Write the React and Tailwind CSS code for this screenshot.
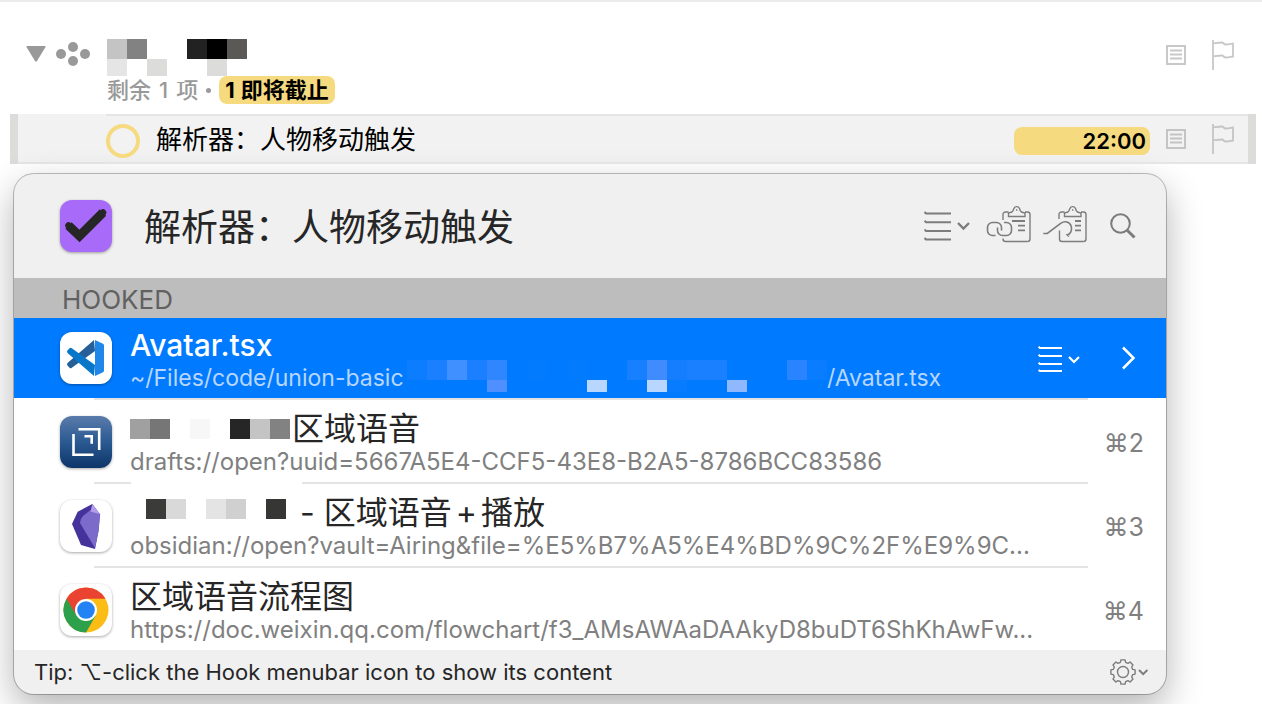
const CARDS = 'size-[52px] shrink-0 rounded-xl shadow-[0_1px_3px_rgba(0,0,0,0.35)]';

// Redacted names, drawn as rows of colour cells
function Mosaic({ rows, className = '' }) {
  return (
    <div aria-hidden="true" className={`shrink-0 ${className}`}>
      {rows.map((row, r) => (
        <div key={r} className={`flex ${row.height}`}>
          {row.cells.map((color, i) => <span key={i} className={`w-5 ${color}`}/>)}
        </div>
      ))}
    </div>
  );
}

const PROJECT_NAME = [
  { height: 'h-5', cells: ['bg-[#c4c4c4]', 'bg-[#828282]', '', '', 'bg-[#222222]', 'bg-black', 'bg-[#5a5955]'] },
  { height: 'h-[17px]', cells: ['bg-[#e5e5e5]', '', 'bg-[#dcdcdb]', '', '', 'bg-[#dcdcdb]', ''] },
];

const HIDDEN_PATH = [
  {
    height: 'h-5',
    cells: ['bg-[#0c7dff]', 'bg-[#1a80ff]', 'bg-[#4090ff]', 'bg-[#1a80ff]', 'bg-[#2f86ff]', '', 'bg-[#037bff]',
      '', 'bg-[#037bff]', '', '', 'bg-[#1680ff]', 'bg-[#408cff]', 'bg-[#147eff]', 'bg-[#1a80ff]', 'bg-[#1a80ff]',
      '', '', '', 'bg-[#2a84ff]', 'bg-[#0a7cff]'],
  },
  {
    height: 'h-3',
    cells: ['', '', '', '', 'bg-[#4f8fff]', '', '', '', '', 'bg-[#b9d6ff]', '', '', 'bg-[#b9d6ff]',
      'bg-[#087cff]', '', '', 'bg-[#90b8ff]', '', '', '', ''],
  },
];

const DRAFT_NAME = [
  { height: 'h-5', cells: ['bg-[#a0a0a0]', 'bg-[#767676]', '', 'bg-[#f7f7f7]', '', 'bg-[#262626]', 'bg-[#c4c4c4]', 'bg-[#828282]'] },
];

const NOTE_NAME = [
  { height: 'h-5', cells: ['bg-[#3b3b39]', 'bg-[#d9d9d9]', '', 'bg-[#e4e4e4]', 'bg-[#d0d0d0]', '', 'bg-[#363634]'] },
];

function NoteIcon() {
  return (
    <svg width="20" height="20" viewBox="0 0 20 20" fill="none" stroke="currentColor" strokeWidth="2">
      <path d="M1 1h18v18H1z"/>
      <path d="M4 5.500h12M4 9.500h12M4 13.500h12" strokeWidth="1.800"/>
    </svg>
  );
}

function FlagIcon() {
  return (
    <svg width="22" height="30" viewBox="0 0 22 30" fill="none" stroke="currentColor" strokeWidth="1.800">
      <path d="M1 0v30M1 3.500c4-.6 6-1 9-1 2 0 1 2 4 2 2 0 4-.5 7-1v13c-3 .5-5 1-7 1-3 0-2-2-4-2-3 0-5 .4-9 1"/>
    </svg>
  );
}

function MenuIcon() {
  return (
    <svg width="46" height="30" viewBox="0 0 46 30" fill="none" stroke="currentColor" strokeWidth="2">
      <path d="M.5 1 2 2.500h25M.5 9.700 2 11.200h25M.5 18.400 2 19.900h25M.5 27 2 28.500h25"/>
      <path d="m34 12 5.500 5.500L45 12" strokeWidth="2.400"/>
    </svg>
  );
}

function RowMenuIcon() {
  return (
    <svg width="42" height="28" viewBox="0 0 42 28" fill="none" stroke="currentColor" strokeWidth="2">
      <path d="M.5 2.700 2 4h22M.5 10.700 2 12h22M.5 18.700 2 20h22M.5 26.200 2 27h22"/>
      <path d="m31 13 5 5 5-5" strokeWidth="2.200"/>
    </svg>
  );
}

function ClipboardTop() {
  return <path d="M22.500 8v3.500H39V8l-3.500-1c-1.500-1-1.500-2-2-3.500a3 3 0 0 0-5.600 0c-.5 1.500-.5 2.500-2 3.500zM30.700 4.200v1.600M39 7h2.500A2.500 2.500 0 0 1 44 9.500V34a2.500 2.500 0 0 1-2.500 2.500"/>;
}

function LinkClipIcon() {
  return (
    <svg width="46" height="42" viewBox="0 0 46 42" fill="none" stroke="currentColor" strokeWidth="1.400">
      <ClipboardTop/>
      <path d="M22.500 7h-3a2.500 2.500 0 0 0-2.500 2.500V15M17 33.500v.5a2.500 2.500 0 0 0 2.500 2.500h22"/>
      <path d="M26 16h13M32 20.700h7M32 25.300h7" strokeWidth="1.800"/>
      <path d="M9.500 30.500h-3a5 5 0 0 1-5-5v-3a5 5 0 0 1 5-5h4a5 5 0 0 1 5 5v3M18 17.500h2.500a5 5 0 0 1 5 5v3a5 5 0 0 1-5 5h-4a5 5 0 0 1-5-5v-3" strokeWidth="1.600"/>
    </svg>
  );
}

function HookClipIcon() {
  return (
    <svg width="46" height="42" viewBox="0 0 46 42" fill="none" stroke="currentColor" strokeWidth="1.400">
      <ClipboardTop/>
      <path d="M22.500 7h-3a2.500 2.500 0 0 0-2.500 2.500V14M17.500 25.500V34a2.500 2.500 0 0 0 2.500 2.500h21.500"/>
      <path d="M33 16h6M33 20.700h6M33 25.300h6" strokeWidth="1.800"/>
      <path d="M1.300 28.500h4L19 18.200c2-1.400 5.500-1.700 8-.2 2.500 1.700 3.500 6 1.500 9.500-.8 1.200-2 2-3.200 2.300l1.800 1.500" strokeWidth="1.600"/>
    </svg>
  );
}

function SearchIcon() {
  return (
    <svg width="26" height="26" viewBox="0 0 26 26" fill="none" stroke="currentColor" strokeWidth="2">
      <circle cx="10.500" cy="10.500" r="9.300"/>
      <path d="m17.200 17.200 7.300 7.300" strokeWidth="3"/>
    </svg>
  );
}

// Eight-tooth outline, walked tooth by tooth around the centre
const gearPoints = Array.from({ length: 8 }, (_, i) => {
  const a = (i * Math.PI) / 4;
  return [[10, -0.26], [12.3, -0.17], [12.3, 0.17], [10, 0.26]]
    .map(([r, d]) => `${(13 + r * Math.cos(a + d)).toFixed(1)},${(13 + r * Math.sin(a + d)).toFixed(1)}`)
    .join(' ');
}).join(' ');

function GearIcon() {
  return (
    <svg width="38" height="26" viewBox="0 0 38 26" fill="none" stroke="currentColor" strokeWidth="1.400">
      <polygon points={gearPoints} strokeLinejoin="round"/>
      <circle cx="13" cy="13" r="5.500"/>
      <path d="m29 11 4.200 4.200L37.400 11" strokeWidth="2"/>
    </svg>
  );
}

function TaskAppIcon() {
  return (
    <svg viewBox="0 0 52 52" className={`${CARDS} bg-[#a86af9]`}>
      <path d="m8.500 25.500 11 10.500L43 12.500" fill="none" stroke="#262626" strokeWidth="9"/>
      <path d="m8.500 25.500 11 10.500L43 12.500" fill="none" stroke="#262626" strokeWidth="6.500" strokeLinecap="round"/>
    </svg>
  );
}

function CodeIcon() {
  return (
    <svg viewBox="0 0 52 52" className={`${CARDS} bg-white`}>
      <path d="M7.500 31 34 8l1 11-23.500 17q-1 .7-2-.2l-2-2.300q-1-1.200 0-2.500z" fill="#265f97"/>
      <path d="M7.500 21 34 44l1-11-23.500-17q-1-.7-2 .2l-2 2.300q-1 1.200 0 2.500z" fill="#0877c9"/>
      <path d="m35 8 8 3.800q1 .5 1 1.700v25q0 1.200-1 1.700L35 44z" fill="#1f86ea"/>
    </svg>
  );
}

function DraftsIcon() {
  return (
    <svg viewBox="0 0 52 52" className={`${CARDS} bg-linear-to-b from-[#5a7bab] via-[#2a5a92] to-[#0d3569]`} fill="none" stroke="#fff" strokeWidth="2.600">
      <path d="M13.500 18v20.800h20M18.500 13.200h20.700V34M24.500 20.200h7.200v7.500"/>
    </svg>
  );
}

function ObsidianIcon() {
  return (
    <svg viewBox="0 0 52 52" className={`${CARDS} bg-white`}>
      <path d="M32.300 4 40 14.300 38.500 31 35 49l-14-4-9-21 5.700-12.300z" fill="#45329a"/>
      <path d="m30.500 10 9.500 4.300L38.500 31 35 48 20 23q0-4 3-7z" fill="#7c6bcb"/>
      <path d="M32.300 4 40 14.300l-9.500-2.800z" fill="#b49bec"/>
    </svg>
  );
}

function ChromeIcon() {
  return (
    <svg viewBox="0 0 52 52" className={`${CARDS} bg-white`}>
      <circle cx="26" cy="26" r="22.500" fill="#fbbc16"/>
      <path d="M26 26 6.500 14.750A22.500 22.500 0 0 0 26 48.500L35.500 32z" fill="#2da04c"/>
      <path d="M26 26 16.500 31.500 6.500 14.750a22.500 22.500 0 0 1 39 0H26z" fill="#ea4331"/>
      <circle cx="26" cy="26" r="11" fill="#fff"/>
      <circle cx="26" cy="26" r="8.800" fill="#2383f5"/>
    </svg>
  );
}

function HookRow({ icon, title, path, shortcut, selected, gap }) {
  return (
    <li className={selected ? 'bg-[#007aff]' : 'bg-white'}>
      {!selected && (
        <div className="mr-[78px] ml-20 flex h-1 items-start">
          <span className={`h-0.5 bg-[#e4e4e4] ${gap ? 'w-[37px]' : 'grow'}`}/>
          {gap && <span className="ml-[171px] h-0.5 grow bg-[#e4e4e4]"/>}
        </div>
      )}
      <div className="flex h-20 items-center pr-[22px] pl-[46px]">
        {icon}
        <a href="#" className="ml-[18px] min-w-0 grow pt-1">
          <span className={`flex h-9 items-center leading-9 whitespace-nowrap ${selected ? 'text-[30px] font-medium text-white' : 'text-[32px] text-[#262626]'}`}>
            {title}
          </span>
          <span className={`flex h-[30px] items-center leading-[30px] whitespace-nowrap ${selected ? 'text-[23px] text-[#b9d6ff]' : 'text-[24px] text-[#808080]'}`}>
            {path}
          </span>
        </a>
        {shortcut && <kbd className="shrink-0 pt-1 font-['Inter','DejaVu_Sans',sans-serif] text-[25px] text-[#808080]">{shortcut}</kbd>}
        {selected && (
          <div className="flex shrink-0 items-center gap-10 pr-2 text-white">
            <button aria-label="Item actions"><RowMenuIcon/></button>
            <button aria-label="Open">
              <svg width="16" height="24" viewBox="0 0 16 24" fill="none" stroke="currentColor" strokeWidth="2.500">
                <path d="m3 1.500 10.500 10.500L3 22.500"/>
              </svg>
            </button>
          </div>
        )}
      </div>
    </li>
  );
}

export default function App() {
  return (
    <main className="min-h-screen overflow-x-hidden border-t-2 border-[#ebebeb] bg-white pb-2.5 font-['Inter','Noto_Sans_CJK_SC',sans-serif] text-black">
      {/* Project header */}
      <header className="flex h-28 items-start pt-[37px] pr-7 pl-[26px]">
        <button aria-label="Collapse project" className="mt-[7px] text-[#999]">
          <svg width="20" height="16" viewBox="0 0 20 16" fill="currentColor"><path d="M1 0h18q1 0 .5 1L11 15q-1 1.500-2 0L.5 1Q0 0 1 0z"/></svg>
        </button>
        <svg width="34" height="24" viewBox="0 0 34 24" fill="#999" className="mt-[3px] ml-2.5">
          <circle cx="5" cy="12" r="5"/><circle cx="17" cy="5" r="5"/><circle cx="17" cy="19" r="5"/><circle cx="29" cy="12" r="5"/>
        </svg>
        <div className="ml-[17px] grow">
          <Mosaic rows={PROJECT_NAME}/>
          <p className="flex h-7 items-center gap-2 text-[22px] leading-7 font-medium whitespace-nowrap text-[#999]">
            <span className="flex gap-2">
              <span>剩余</span>
              <span>1</span>
              <span>项</span>
            </span>
            <span className="size-[5px] rounded-full bg-[#999]"/>
            <span className="flex gap-1.5 rounded-lg bg-[#f5da7f] px-1.5 font-bold text-black">
              <span>1</span>
              <span>即将截止</span>
            </span>
          </p>
        </div>
        <div className="flex items-center gap-[26px] pt-px text-[#c8c8c8]">
          <button aria-label="Project note"><NoteIcon/></button>
          <button aria-label="Flag project"><FlagIcon/></button>
        </div>
      </header>

      {/* Selected task */}
      <section className="mr-1.5 ml-2.5 flex h-[50px] border-x-8 border-[#dcdcdb] bg-[#f2f2f2]">
        <div className="w-[88px] border-b-2 border-[#e2e2e2]"/>
        <div className="flex grow items-center border-y-2 border-[#e5e5e5] pr-3.5">
          <input id="task" type="checkbox" className="mt-1 size-[34px] appearance-none rounded-full border-4 border-[#f5da7f]"/>
          <label htmlFor="task" className="ml-4 grow pt-0.5 text-[26px] leading-9">解析器：人物移动触发</label>
          <time className="mt-1 mr-4 h-7 w-[136px] rounded-lg bg-[#f5da7f] pr-1 text-right text-[22px] leading-7 font-semibold">22:00</time>
          <div className="flex items-center gap-[26px] text-[#c4c4c4]">
            <button aria-label="Task note"><NoteIcon/></button>
            <button aria-label="Flag task"><FlagIcon/></button>
          </div>
        </div>
      </section>

      {/* Hook window */}
      <section className="mt-2.5 mr-24 ml-3.5 overflow-hidden rounded-[20px] bg-[#f0f0f0] shadow-[0_0_0_1px_rgba(0,0,0,0.25),0_14px_36px_rgba(0,0,0,0.3)]">
        <div className="flex h-26 items-center pr-[30px] pl-[46px]">
          <TaskAppIcon/>
          <h1 className="ml-8 grow pt-1 text-[37px] whitespace-nowrap text-[#262626]">解析器：人物移动触发</h1>
          <div className="flex items-center text-[#7c7c7c]">
            <button aria-label="Menu" className="mr-4"><MenuIcon/></button>
            <button aria-label="Copy link" className="mr-2.5"><LinkClipIcon/></button>
            <button aria-label="Hook to copied link" className="mr-[22px]"><HookClipIcon/></button>
            <button aria-label="Search"><SearchIcon/></button>
          </div>
        </div>
        <h2 className="h-10 bg-[#bdbdbd] pt-0.5 pl-12 text-[26px] leading-10 text-[#616161]">HOOKED</h2>
        <ul>
          <HookRow
            selected
            icon={<CodeIcon/>}
            title="Avatar.tsx"
            path={<>
              <span className="w-[275px] shrink-0">~/Files/code/union-basic</span>
              <Mosaic rows={HIDDEN_PATH} className="ml-0.5 pb-1"/>
              /Avatar.tsx
            </>}
          />
          <HookRow
            icon={<DraftsIcon/>}
            title={<><Mosaic rows={DRAFT_NAME} className="mr-0.5"/>区域语音</>}
            path="drafts://open?uuid=5667A5E4-CCF5-43E8-B2A5-8786BCC83586"
            shortcut="⌘2"
          />
          <HookRow
            gap
            icon={<ObsidianIcon/>}
            title={<><Mosaic rows={NOTE_NAME} className="mr-3.5 ml-4 pb-2"/>- 区域语音<span className="mx-1">+</span>播放</>}
            path="obsidian://open?vault=Airing&file=%E5%B7%A5%E4%BD%9C%2F%E9%9C..."
            shortcut="⌘3"
          />
          <HookRow
            icon={<ChromeIcon/>}
            title="区域语音流程图"
            path="https://doc.weixin.qq.com/flowchart/f3_AMsAWAaDAAkyD8buDT6ShKhAwFw..."
            shortcut="⌘4"
          />
        </ul>
        <footer className="flex h-11 items-center justify-between pr-[18px] pl-5 text-[22px] text-[#262626]">
          <p className="font-['Inter','DejaVu_Sans',sans-serif] whitespace-nowrap">Tip: ⌥-click the Hook menubar icon to show its content</p>
          <button aria-label="Settings" className="text-[#7c7c7c]"><GearIcon/></button>
        </footer>
      </section>
    </main>
  );
}
